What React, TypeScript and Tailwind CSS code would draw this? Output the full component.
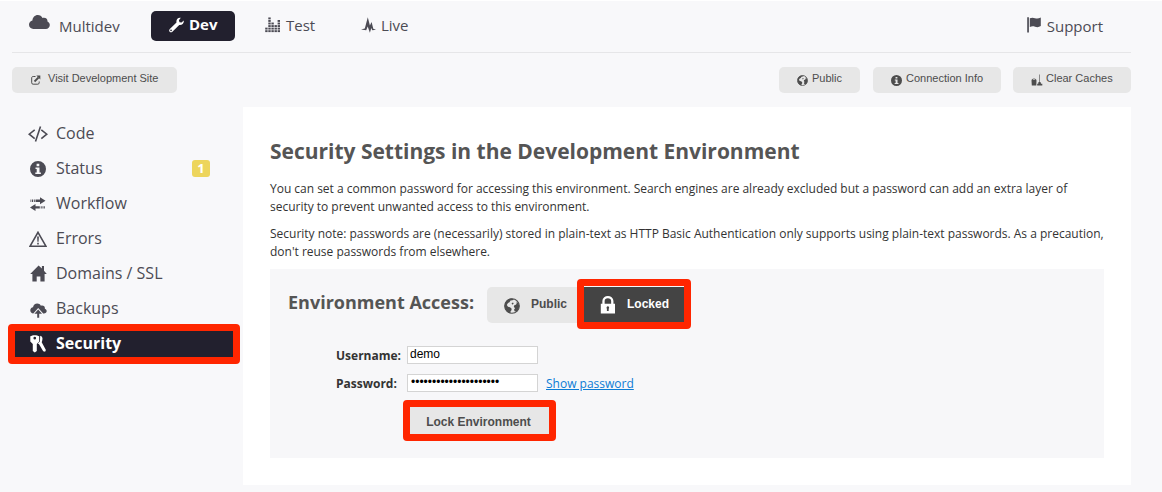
import type { ReactNode } from 'react';

type IconProps = { className?: string };

const CloudIcon = ({ className }: IconProps) => (
  <svg className={className} width="21" height="15" viewBox="0 0 21 15" fill="currentColor">
    <path d="M4.5 14A4.3 4.3 0 0 1 0 9.8C0 7.6 1.5 6 3.4 5.6 3.6 2.3 5.900 0 8.800 0c2.200 0 3.800 1.100 4.700 3 3.300-.8 5.200 1.200 5 3.500C20 7.200 20.800 8.500 20.800 10c0 2.300-1.700 4-3.900 4z" />
  </svg>
);

const WrenchIcon = ({ className }: IconProps) => (
  <svg className={className} width="15" height="16" viewBox="0 0 15 16" fill="currentColor">
    <path
      fillRule="evenodd"
      d="M11.800.8 9.900 3.300l.6 2 2.100.3 2.100-2.200c.6 2.900-1.700 5.100-4.500 4.600L3.400 14.700c-.8.8-2 .8-2.700.1-.8-.8-.7-2 .1-2.700l6.700-6.700C6.900 2.700 9 .2 11.800.8zM2 12.600a.8.8 0 1 0 .1 1.600.8.8 0 0 0-.1-1.600z"
    />
  </svg>
);

const EqualizerIcon = ({ className }: IconProps) => (
  <svg className={className} width="16" height="16" viewBox="0 0 16 16" fill="currentColor">
    {[2, 6, 4, 3, 5].map((count, col) =>
      Array.from({ length: count }, (_, row) => (
        <rect key={`${col}-${row}`} x={col * 3.1 + 0.2} y={13.2 - row * 2.55} width="2.400" height="1.900" />
      )),
    )}
  </svg>
);

const PulseIcon = ({ className }: IconProps) => (
  <svg className={className} width="15" height="17" viewBox="0 0 15 17" fill="currentColor">
    <path d="M0 12.600 3.800 11.500 6.800.2 8.900 8.500 10.600 5 12.300 11.700 15 12.800 11.300 13.200 10.300 11 8.900 15.700 6.700 9.500 5.200 13.200z" />
  </svg>
);

const FlagIcon = ({ className }: IconProps) => (
  <svg className={className} width="15" height="16" viewBox="0 0 15 16" fill="currentColor">
    <path d="M.2.200h1.700v15.400H.200z" />
    <path d="M2.800 1.200C5 .3 6.400.6 8 1.200c2 .7 3.600.5 5.800-.7v8.600c-2 1.300-3.900 1.300-5.800.6-1.700-.6-3.200-.6-5.200.3z" />
  </svg>
);

const ExternalIcon = ({ className }: IconProps) => (
  <svg className={className} width="10" height="10" viewBox="0 0 10 10" fill="none" stroke="currentColor">
    <path d="M4.500 1.500H2.200C1.200 1.500.7 2 .7 2.900v4.900c0 .9.500 1.400 1.400 1.400h4.700c.9 0 1.400-.5 1.400-1.400V6.500" strokeWidth="1" />
    <path d="M3.500 6.500 7.500 2.500" strokeWidth="1.800" />
    <path d="M5.300.5H9.300V4.500z" fill="currentColor" stroke="none" />
  </svg>
);

const GlobeIcon = ({ className, size }: IconProps & { size: number }) => (
  <svg className={className} width={size} height={size} viewBox="0 0 16 16">
    <circle cx="8" cy="8" r="7.300" fill="none" stroke="currentColor" strokeWidth="1.100" />
    <path
      fill="currentColor"
      d="M.8 7C1 3.500 4 .8 7.500.6L10 1.200 8.500 2.200 6.500 2.600 5.500 4.200 4 5 2.800 7 4 8.700 6 9.200 7.500 10.500 7.600 12 6.500 13.400 6.500 15.300C3 14.500.3 11.500.8 7zM7.500 5.200l1.500-.7.7 1-1.200 1.200zM12.300 3.200l2 2 1 2.800-.5 2.600-1.600 2.700-2.400.2-.8-1.800 1-1.400-1.200-1.500.7-1.700 1.500-.4.8-1.700z"
    />
  </svg>
);

const InfoIcon = ({ className, size }: IconProps & { size: number }) => (
  <svg className={className} width={size} height={size} viewBox="0 0 16 16" fill="currentColor">
    <path
      fillRule="evenodd"
      d="M8 0a8 8 0 1 1 0 16A8 8 0 0 1 8 0zM6.600 2.800v2.400h2.700V2.800zM5.500 6.500v1.400h1.200v3.600H5.300V13h5.600v-1.500H9.500v-5z"
    />
  </svg>
);

const CleanIcon = ({ className }: IconProps) => (
  <svg className={className} width="12" height="12" viewBox="0 0 12 12" fill="currentColor">
    <path fillRule="evenodd" d="M.5 6.500C.5 3.800 5.500 3.800 5.500 6.500L5.300 11.500H.8zM1.500 6h3c-.4-1.100-2.600-1.100-3 0z" />
    <path d="M8 .5h1v7.500H8z" opacity=".6" />
    <path d="M7.500 8h2l.5 1.800h1.300v1.700H6.200V9.800h1z" />
  </svg>
);

const CodeIcon = ({ className }: IconProps) => (
  <svg className={className} width="20" height="16" viewBox="0 0 20 16" fill="none" stroke="currentColor" strokeWidth="1.600">
    <path d="M6.700 3.800 1.200 8.200 6.700 12.600M13.300 3.800 18.800 8.200 13.300 12.600M12.500.5 7.500 15.500" />
  </svg>
);

const ArrowsIcon = ({ className }: IconProps) => (
  <svg className={className} width="16" height="14" viewBox="0 0 16 14" fill="currentColor">
    <path d="M10 .2 15.500 3.700 10 7.200V4.900H5.500V2.500H10zM3.800 2.500h1v2.400h-1zM2 2.500h1v2.400H2zM.5 2.500h.8v2.400H.500z" />
    <path d="M5.500 6.900 0 10.400l5.500 3.500v-2.300h4.300V9.200H5.500zM10.700 9.200h1v2.400h-1zM12.500 9.200h1v2.400h-1zM14.200 9.200h.8v2.400h-.8z" />
  </svg>
);

const WarningIcon = ({ className }: IconProps) => (
  <svg className={className} width="18" height="16" viewBox="0 0 18 16">
    <path d="M9 1.300 16.900 15.200H1.100z" fill="none" stroke="currentColor" strokeWidth="1.600" />
    <path d="M8.100 5.500h1.800L9.600 10.800H8.400zM8.200 11.800h1.600v1.700H8.200z" fill="currentColor" />
  </svg>
);

const HomeIcon = ({ className }: IconProps) => (
  <svg className={className} width="17" height="17" viewBox="0 0 17 17" fill="currentColor">
    <path d="M8.600.4 11.900 3.600V.9H14v4.800L16.800 9H14.600v7.500H10.400V11.500H6.700v5H2.400V9H.2z" />
  </svg>
);

const BackupIcon = ({ className }: IconProps) => (
  <svg className={className} width="17" height="15" viewBox="0 0 17 15" fill="currentColor">
    <path d="M3.300 10.500A3.200 3.200 0 0 1 .3 7.600C.2 5.800 1.500 4.500 3 4.300 3.300 1.900 5.100.5 7.200.5c1.700 0 3 .8 3.700 2.200 2.400-.6 4.200.7 4 3 1.200.5 1.800 1.300 1.800 2.400 0 1.500-1.200 2.500-2.800 2.500h-.7L8.200 5z" />
    <path d="M8.200 6.500 12 10.800H9.200V14.700H7.200V10.800H4.400z" />
  </svg>
);

const KeysIcon = ({ className }: IconProps) => (
  <svg className={className} width="16" height="18" viewBox="0 0 16 18" fill="currentColor">
    <path
      fillRule="evenodd"
      d="M.3 1.300C2.500-.2 7-.2 9.200 1.300v5.200L6.800 9v7L4.800 17.600 2.800 16V9L.3 6.500zM4.700 1.800a1.300 1.300 0 1 0 .1 2.600 1.300 1.300 0 0 0-.1-2.600z"
    />
    <path d="M10.200.8C12 1.200 13 3 12.300 5.200L11.700 7.300 15.900 15l-.8 1.700-1.900-.5-4.300-7.200L7.700 8.500 9.900 6.500z" />
  </svg>
);

const LockIcon = ({ className }: IconProps) => (
  <svg className={className} width="16" height="18" viewBox="0 0 16 18">
    <path d="M3.500 8.500V5C3.500-.1 12.300-.1 12.300 5v3.500" fill="none" stroke="currentColor" strokeWidth="2.300" />
    <path
      fill="currentColor"
      fillRule="evenodd"
      d="M.8 7.800H15V17.500H.8zM7.900 10.200a1.500 1.500 0 0 0-1 2.500V15h1.800v-2.300a1.500 1.500 0 0 0-.8-2.500z"
    />
  </svg>
);

const EnvTab = ({ icon, label, className }: { icon: ReactNode; label: string; className: string }) => (
  <a className={`flex items-start text-[15px] leading-[22px] text-[#4c4b54] ${className}`}>
    {icon}
    <span>{label}</span>
  </a>
);

const ToolButton = ({ icon, label, className }: { icon: ReactNode; label: string; className: string }) => (
  <button
    className={`flex h-[26px] shrink-0 items-start rounded-[5px] bg-[#e7e7e7] pt-[3px] font-['Liberation_Sans',sans-serif] text-[11px] leading-[16px] text-[#4d4d4d] ${className}`}
  >
    {icon}
    <span className="whitespace-nowrap">{label}</span>
  </button>
);

const navItems: { label: string; icon: ReactNode; badge?: string; active?: boolean }[] = [
  { label: 'Code', icon: <CodeIcon className="mt-[1px]" /> },
  { label: 'Status', icon: <InfoIcon size={16} className="mt-[1px]" />, badge: '1' },
  { label: 'Workflow', icon: <ArrowsIcon className="mt-[2px]" /> },
  { label: 'Errors', icon: <WarningIcon className="mt-[1px]" /> },
  { label: 'Domains / SSL', icon: <HomeIcon /> },
  { label: 'Backups', icon: <BackupIcon className="mt-[3px]" /> },
  { label: 'Security', icon: <KeysIcon />, active: true },
];

export default function App() {
  return (
    <div className="h-[492px] w-[1162px] overflow-hidden border-t border-white bg-[#f8f8fa] pl-[12px] font-['Open_Sans',sans-serif]">
      <header className="flex h-[52px] w-[1119px] items-start border-b border-[#e6e6e8]">
        <EnvTab className="ml-[17px] w-[122px] pt-[14px]" icon={<CloudIcon className="mr-[9px]" />} label="Multidev" />
        <a className="mt-[10px] flex h-[30px] w-[84px] items-start rounded-[5px] bg-[#22202e] pl-[18px] pt-[2px] text-[15px] font-bold leading-[22px] text-white">
          <WrenchIcon className="mr-[5px] mt-[4px]" />
          <span>Dev</span>
        </a>
        <EnvTab className="ml-[30px] w-[96px] pt-[13px]" icon={<EqualizerIcon className="mr-[5px] mt-[3px]" />} label="Test" />
        <EnvTab className="pt-[13px]" icon={<PulseIcon className="mr-[5px] mt-[3px]" />} label="Live" />
        <EnvTab className="ml-auto mr-[28px] pt-[14px]" icon={<FlagIcon className="mr-[5px] mt-[2px]" />} label="Support" />
      </header>

      <div className="flex h-[54px] w-[1119px] items-start pt-[14px]">
        <ToolButton className="w-[165px] pl-[19px]" icon={<ExternalIcon className="mr-[7px] mt-[5px]" />} label="Visit Development Site" />
        <ToolButton className="ml-auto w-[81px] pl-[18px]" icon={<GlobeIcon size={11} className="mr-[4px] mt-[5px]" />} label="Public" />
        <ToolButton className="ml-[13px] w-[128px] pl-[18px]" icon={<InfoIcon size={11} className="mr-[4px] mt-[5px]" />} label="Connection Info" />
        <ToolButton className="ml-[12px] w-[118px] pl-[18px]" icon={<CleanIcon className="mr-[3px] mt-[4px]" />} label="Clear Caches" />
      </div>

      <div className="flex w-[1119px] items-start">
        <nav className="relative w-[231px] shrink-0 pt-[14px]">
          {navItems.map((item) => (
            <a
              key={item.label}
              className={`mb-[9px] ml-[2px] flex h-[26px] w-[219px] items-start pt-[4px] text-[16px] leading-[20px] ${
                item.active ? 'bg-[#22202e] font-bold text-white' : 'text-[#4c4b54]'
              }`}
            >
              <span className="ml-[14px] flex w-[20px] shrink-0 justify-center">{item.icon}</span>
              <span className="-mt-[2px] ml-[8px]">{item.label}</span>
              {item.badge && (
                <span className="ml-auto mr-[23px] h-[17px] w-[18px] rounded-[3px] bg-[#edd55c] text-center text-[13px] font-bold leading-[16px] text-white">
                  {item.badge}
                </span>
              )}
            </a>
          ))}
          <div className="absolute left-[-4px] top-[217px] h-[40px] w-[232px] rounded-[4px] border-[7px] border-[#ff2600]" />
        </nav>

        <main className="h-[378px] w-[888px] bg-white px-[27px] pt-[29px]">
          <h1 className="whitespace-nowrap text-[21px] font-bold leading-[30px] tracking-[-0.015px] text-[#555]">
            Security Settings in the Development Environment
          </h1>
          <p className="mt-[14px] whitespace-nowrap text-[12px] leading-[18px] tracking-[-0.016px] text-[#333]">
            You can set a common password for accessing this environment. Search engines are already excluded but a
            password can add an extra layer of
            <br />
            security to prevent unwanted access to this environment.
          </p>
          <p className="mt-[9px] whitespace-nowrap text-[12px] leading-[18px] tracking-[-0.01px] text-[#333]">
            Security note: passwords are (necessarily) stored in plain-text as HTTP Basic Authentication only supports
            using plain-text passwords. As a precaution,
            <br />
            don't reuse passwords from elsewhere.
          </p>

          <section className="mt-[8px] h-[189px] w-[834px] bg-[#f7f7f9] pl-[18px] pt-[18px]">
            <div className="flex h-[36px] items-start">
              <h2 className="w-[199px] whitespace-nowrap text-[18px] font-bold leading-[30px] text-[#555]">Environment Access:</h2>
              <div className="relative flex font-['Liberation_Sans',sans-serif] text-[12px] font-bold">
                <button className="flex h-[36px] w-[97px] items-start rounded-l-[5px] bg-[#e7e7e7] pl-[17px] text-[#4d4d4d]">
                  <GlobeIcon size={16} className="mr-[11px] mt-[11px]" />
                  <span className="mt-[8px] leading-[18px]">Public</span>
                </button>
                <button className="flex h-[36px] w-[100px] items-start bg-[#444] pl-[16px] text-white">
                  <LockIcon className="mr-[11px] mt-[9px]" />
                  <span className="mt-[8px] leading-[18px]">Locked</span>
                </button>
                <div className="absolute left-[90px] top-[-8px] h-[50px] w-[114px] rounded-[4px] border-[7px] border-[#ff2600]" />
              </div>
            </div>

            <div className="ml-[48px] mt-[23px] flex h-[28px] items-start text-[12px]">
              <label className="w-[71px] whitespace-nowrap pt-[1px] font-bold leading-[18px] text-[#333]">Username:</label>
              <div className="h-[18px] w-[131px] border border-[#d4d4d4] bg-white pl-[2px] font-['Liberation_Sans',sans-serif] leading-[14px] text-black">
                demo
              </div>
            </div>
            <div className="ml-[48px] flex h-[28px] items-start text-[12px]">
              <label className="w-[71px] whitespace-nowrap pt-[1px] font-bold leading-[18px] text-[#333]">Password:</label>
              <div className="h-[18px] w-[131px] border border-[#d4d4d4] bg-white pl-[3px] font-['Liberation_Sans',sans-serif] leading-[14px] text-black">
                •••••••••••••••••••••
              </div>
              <a className="ml-[8px] whitespace-nowrap pt-[1px] leading-[18px] text-[#0c7cd5] underline">Show password</a>
            </div>
            <div className="relative ml-[115px] mt-[-2px] h-[41px] w-[153px]">
              <button className="ml-[6px] mt-[6px] h-[29px] w-[141px] bg-[#e7e7e7] pr-[2px] pt-[2px] font-['Liberation_Sans',sans-serif] text-[12px] font-bold text-[#4d4d4d]">
                Lock Environment
              </button>
              <div className="absolute inset-0 rounded-[4px] border-[7px] border-[#ff2600]" />
            </div>
          </section>
        </main>
      </div>
    </div>
  );
}
